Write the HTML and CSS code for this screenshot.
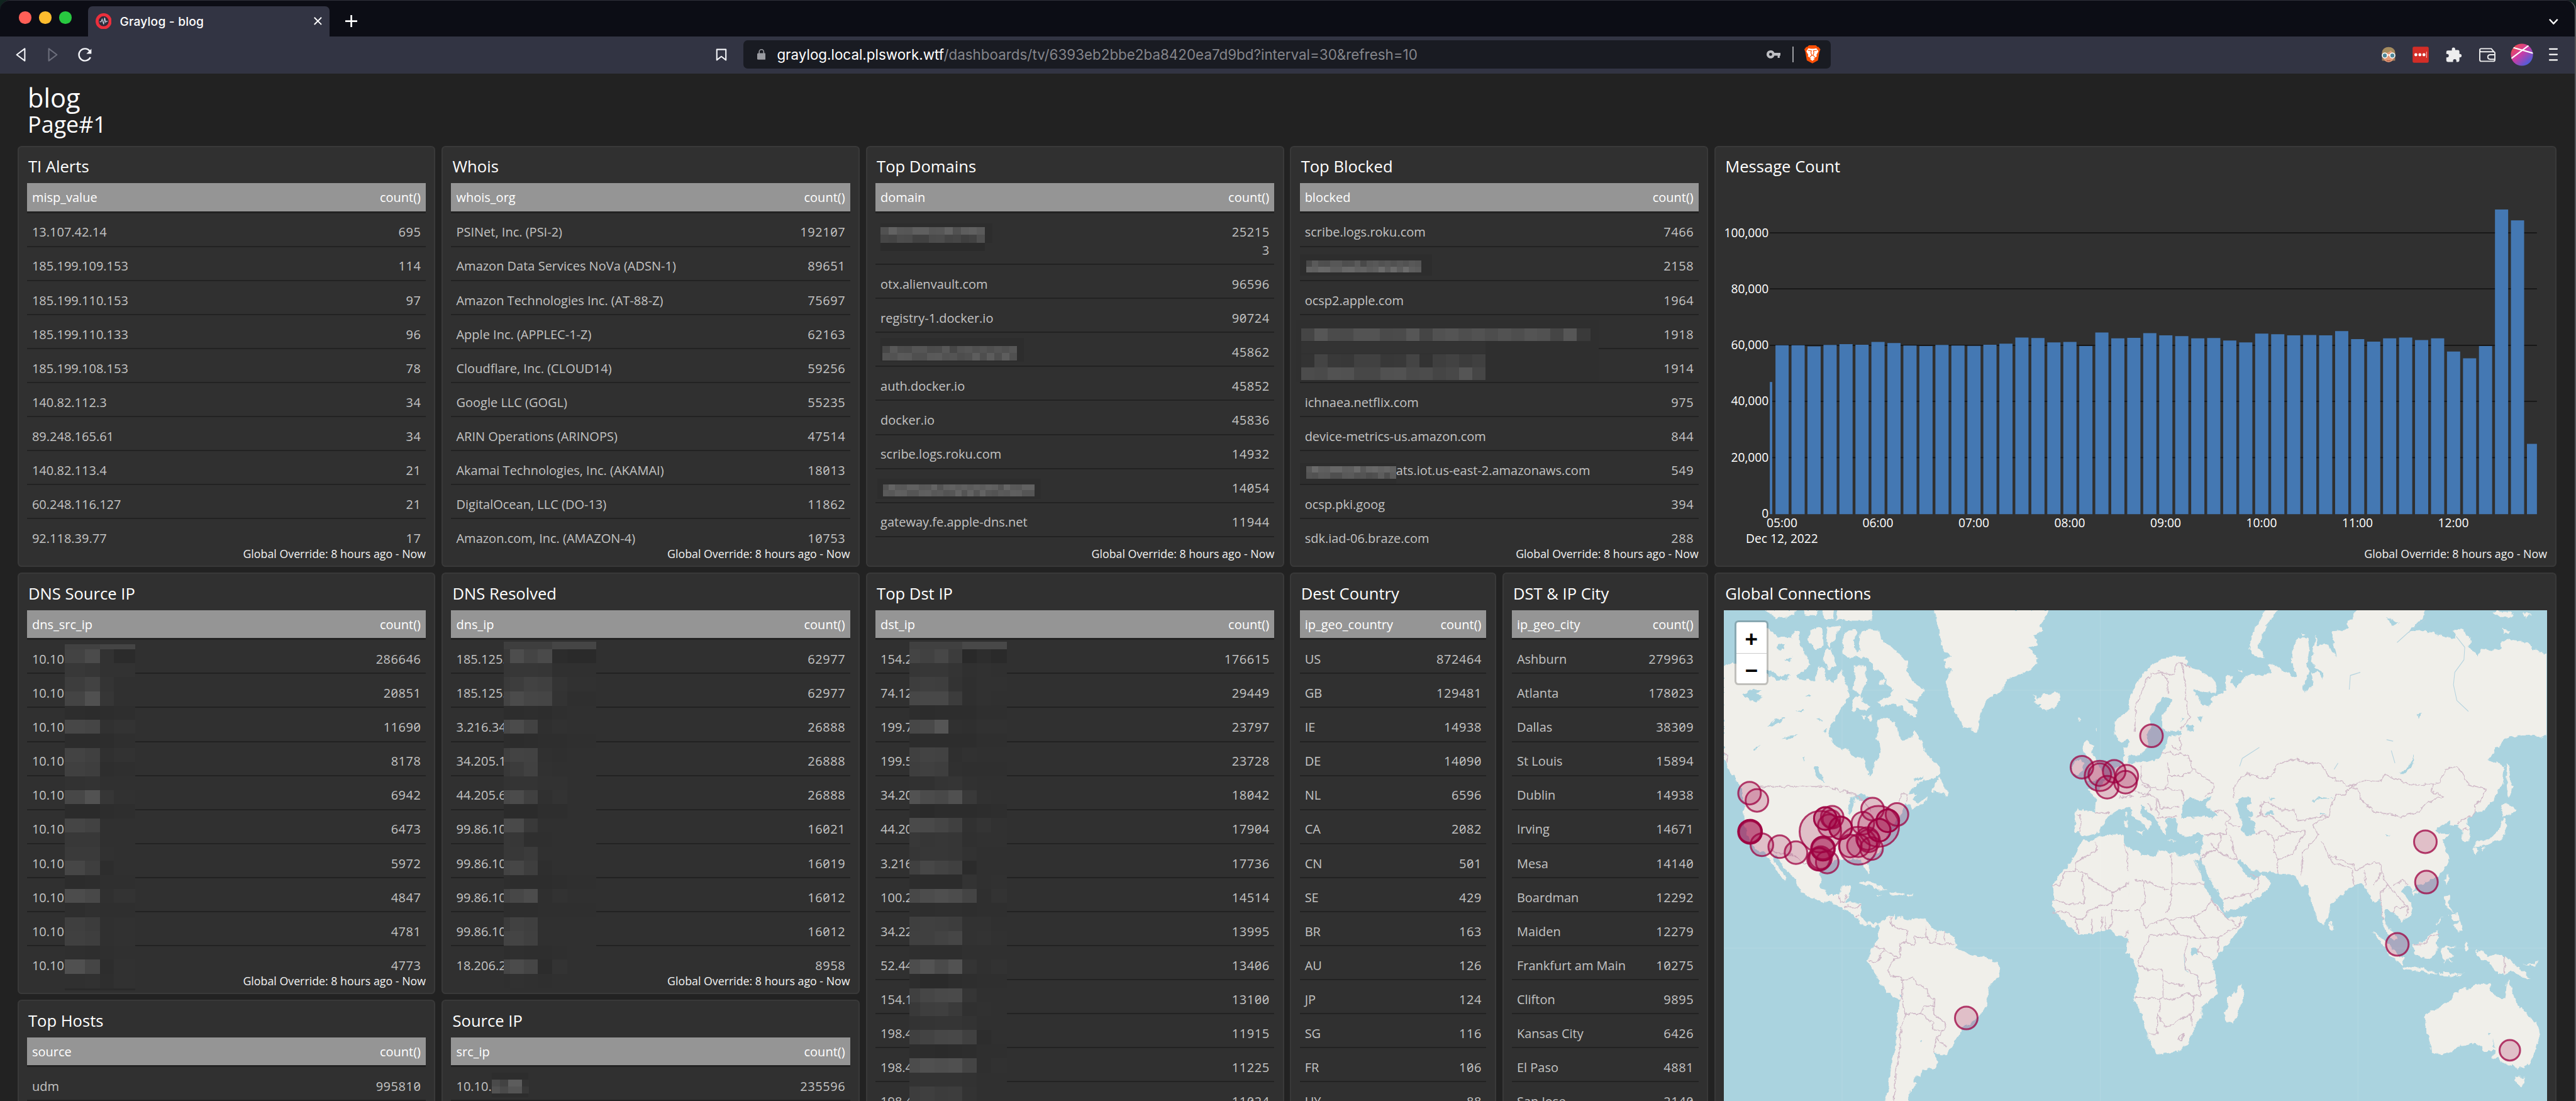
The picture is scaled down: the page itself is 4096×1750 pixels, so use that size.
FILE: index.html
```html
<!DOCTYPE html>
<html lang="en">
<head>
<meta charset="utf-8">
<title>Graylog - blog</title>
<link rel="stylesheet" href="styles.css">
</head>
<body>
<div class="window">
  <header class="tabs">
    <div class="lights"><i class="red"></i><i class="yellow"></i><i class="green"></i></div>
    <div class="tab">
      <svg class="favicon" viewBox="0 0 32 32"><circle cx="16" cy="16" r="13" fill="#2b2c3a" stroke="#eb2f3c" stroke-width="6"/><path d="M8 17h3l2-5 3 10 2-13 2 9 1-2h3" fill="none" stroke="#c9ccdb" stroke-width="1.5"/></svg>
      <span class="tab-title">Graylog - blog</span>
      <svg class="close" viewBox="0 0 16 16"><path d="M1 1l14 14M15 1L1 15" stroke="#fff" stroke-width="2.4"/></svg>
    </div>
    <svg class="newtab" viewBox="0 0 24 24"><path d="M12 0v24M0 12h24" stroke="#fff" stroke-width="3.4"/></svg>
    <svg class="tabmenu" viewBox="0 0 18 12"><path d="M1 1l8 8.5L17 1" fill="none" stroke="#fff" stroke-width="3"/></svg>
  </header>
  <div class="toolbar">
    <div class="nav">
      <svg viewBox="0 0 50 50"><path d="M33 13v24L17 25z" fill="none" stroke="#f3f4f8" stroke-width="2.6" stroke-linejoin="round"/></svg>
      <svg viewBox="0 0 50 50"><path d="M17 13v24l16-12z" fill="none" stroke="#6c6e7c" stroke-width="2.6" stroke-linejoin="round"/></svg>
      <svg viewBox="0 0 50 50"><path d="M36 30A12 12 0 1 1 34.500 17.500" fill="none" stroke="#f3f4f8" stroke-width="3"/><path d="M38 13v10h-10z" fill="#f3f4f8"/></svg>
      <svg class="bookmark" viewBox="0 0 50 50"><path d="M16 14.500h18v21l-9-7-9 7z" fill="none" stroke="#f3f4f8" stroke-width="2.6" stroke-linejoin="round"/></svg>
    </div>
    <div class="address">
      <svg class="lock" viewBox="0 0 17 22"><path d="M4 9V5.500a4.500 4.500 0 0 1 9 0V9" fill="none" stroke="#9a9ba1" stroke-width="2"/><rect y="8" width="17" height="13" rx="2" fill="#9a9ba1"/></svg>
      <span class="url"><b>graylog.local.plswork.wtf</b>/dashboards/tv/6393eb2bbe2ba8420ea7d9bd?interval=30&amp;refresh=10</span>
      <svg class="key" viewBox="0 0 28 16"><path d="M8 0a8 8 0 1 0 7.500 10.500H22V15h4v-4.500h2V5H15.500A8 8 0 0 0 8 0zm0 5a3 3 0 1 1 0 6 3 3 0 0 1 0-6z" fill="#bdbec2" fill-rule="evenodd"/></svg>
      <i class="sep"></i>
      <svg class="brave" viewBox="0 0 32 36"><path d="M9 0h14l3 3h2l4 5-2 5-3 17-11 6-11-6L2 13 0 8l4-5h2z" fill="#fb4f05"/><path d="M8 6l5 1h6l5-1 4 6-4 7 1 3-5 3h-8l-5-3 1-3-4-7z" fill="#fff"/><path d="M16 24l5 3-5 4-5-4z" fill="#fff"/><path d="M7 10l7 1-1 4 2 5-4 3M25 10l-7 1 1 4-2 5 4 3M14 20h4" fill="none" stroke="#fb4f05" stroke-width="1.500"/></svg>
    </div>
    <div class="extensions">
      <svg viewBox="0 0 50 50"><path d="M12 37V20a13 10 0 0 1 26 0v17z" fill="#9d7a58"/><ellipse cx="25" cy="27" rx="11.500" ry="13" fill="#e39a78"/><path d="M12 24c-1-19 27-19 26 0-6-3-8-6-8-8-4 4-9 7-18 8z" fill="#a48c5f"/><path d="M21 36q4 2 8 0" stroke="#b5583f" stroke-width="1.500" fill="none"/><circle cx="17.500" cy="26.500" r="5" fill="#4f8797" stroke="#fff" stroke-width="2"/><circle cx="32.500" cy="26.500" r="5" fill="#4f8797" stroke="#fff" stroke-width="2"/><path d="M22 25.500h6" stroke="#fff" stroke-width="2"/></svg>
      <svg class="m11" viewBox="0 0 50 50"><rect x="9" y="9" width="32" height="32" rx="3" fill="#d32d27"/><g fill="#fff"><circle cx="15.500" cy="25" r="3"/><circle cx="23.500" cy="25" r="3"/><circle cx="31.500" cy="25" r="3"/><rect x="36" y="19" width="1.500" height="12" fill="#f3a9a6"/></g></svg>
      <svg class="m12" viewBox="0 0 50 50"><path d="M22 15v-1a3.300 3.300 0 0 1 6.600 0v1.500H34q3 0 3 3v5h1a3.300 3.300 0 0 1 0 6.800h-1v6q0 3-3 3h-3V37a3.300 3.300 0 0 0-6.600 0v2.300H14q-3 0-3-3v-6h1.500a3.300 3.300 0 0 0 0-6.800H11v-4q0-3 3-3h8z" fill="#ededee"/></svg>
      <svg class="m14" viewBox="0 0 50 50"><path d="M10 17v18q0 3 3 3h24q3 0 3-3V22q0-3-3-3H12q-2-1-2-3.500t3-2.500h20l5 6" fill="none" stroke="#ededee" stroke-width="2.400"/><path d="M40 25h-9q-5 0-5 4.500t5 4.500h9" fill="none" stroke="#ededee" stroke-width="2.400"/></svg>
      <svg class="m15" viewBox="0 0 50 50"><defs><linearGradient id="ball" x1=".1" y1=".1" x2=".85" y2=".95"><stop offset="0" stop-color="#f04d4e"/><stop offset=".45" stop-color="#cb3ba6"/><stop offset="1" stop-color="#3b62e0"/></linearGradient><clipPath id="ballclip"><circle cx="25" cy="25" r="22"/></clipPath></defs><circle cx="25" cy="25" r="22" fill="url(#ball)"/><path clip-path="url(#ballclip)" d="M2 34L42 4M5 10l46 13" stroke="#fff" stroke-width="2.600"/></svg>
      <svg class="m10" viewBox="0 0 50 50"><path d="M17.500 13.500h15M17.500 24.500h15M17.500 35.500h15" stroke="#fff" stroke-width="2.800" stroke-linecap="round"/></svg>
    </div>
  </div>
  <main class="page">
    <h1>blog</h1>
    <h2>Page#1</h2>
    <div class="dashboard" id="dashboard"></div>
  </main>
</div>
<script src="app.js"></script>
</body>
</html>
```
FILE: styles.css
```css
* { box-sizing: border-box; }
html, body { margin: 0; height: 1750px; overflow: hidden; background: #10241f; }
body { font-family: "Open Sans", "Noto Sans", sans-serif; color: #fff; }
.window { width: 4096px; height: 1750px; overflow: hidden; background: #222; border-radius: 16px 16px 0 0; position: relative; }
.window::after { content: ""; position: absolute; inset: 0; border-right: 2px solid #57585c; border-top: 1px solid #30313a; border-radius: 16px 16px 0 0; pointer-events: none; }
svg { display: block; flex: none; }

.tabs { height: 57.6px; background: #0c0d15; display: flex; align-items: flex-end; }
.lights { display: flex; gap: 12.8px; width: 139.6px; padding: 0 0 20px 30.4px; }
.lights i { width: 19.2px; height: 19.2px; border-radius: 50%; }
.red { background: #ff5f57; }
.yellow { background: #febc2e; }
.green { background: #28c840; }
.tab { width: 384px; height: 48px; background: #323443; border-radius: 7px 7px 0 0; display: flex; align-items: center; padding: 0 12px 0 12.2px; }
.favicon { width: 25.6px; height: 25.6px; }
.tab-title { font: 500 19.2px/24px Inter, sans-serif; margin-left: 13px; letter-spacing: .2px; }
.close { width: 12.8px; height: 12.8px; margin-left: auto; }
.newtab { width: 19.2px; height: 19.2px; margin: 0 0 14.4px 25.6px; }
.tabmenu { width: 14.6px; height: 9.6px; margin: 0 28px 18.5px auto; }

.toolbar { height: 59.3px; background: #323443; display: grid; grid-template-columns: 1182.3px 1728.7px 1fr; align-items: center; }
.nav { display: flex; gap: 11.2px; padding: 0 15.8px 0 12.8px; }
.nav svg, .extensions svg { width: 40px; height: 40px; }
.bookmark { margin-left: auto; }
.address { height: 44.8px; border-radius: 7px; background: #191b22; display: flex; align-items: center; padding: 0 16px 0 21.5px; margin-bottom: 1.2px; }
.lock { width: 13.6px; height: 17.6px; }
.url { font: 400 22.4px/28px Inter, sans-serif; color: #84858b; margin-left: 18px; white-space: nowrap; }
.url b { font-weight: 400; color: #fff; }
.key { width: 22.4px; height: 12.8px; margin-left: auto; }
.sep { width: 1.6px; height: 25.6px; background: #9c9da2; margin: 0 17.5px 0 19.2px; }
.brave { width: 25.6px; height: 28.8px; }
.extensions { display: flex; justify-content: flex-end; padding-right: 16px; }
.m10 { margin-left: 10px; }
.m11 { margin-left: 11px; }
.m12 { margin-left: 12px; }
.m14 { margin-left: 14px; }
.m15 { margin-left: 15px; }

.page { padding: 14.7px 0 0 27.5px; }
h1, h2 { margin: 0; padding-left: 16.6px; font-weight: 400; }
h1 { font-size: 41.6px; line-height: 46.2px; }
h2 { font-size: 35.9px; line-height: 39px; }
.dashboard { margin-top: 14.8px; width: 4037.8px; display: grid; grid-template-columns: repeat(12, 1fr); grid-auto-rows: 669.2px; gap: 9.7px; }
.panel { grid-column: span 2; position: relative; background: #303030; border: 2px solid #393939; border-radius: 6.4px; padding: 13.8px 13.4px 7px; display: flex; flex-direction: column; min-width: 0; overflow: hidden; }
.half { grid-column: span 1; }
.wide { grid-column: span 4; }
.tall { grid-row: span 2; }
h3 { margin: 0 0 8.9px; font-weight: 400; font-size: 25.6px; line-height: 35.1px; flex: none; padding-left: 2px; white-space: nowrap; }
.body { flex: 1; min-height: 0; overflow: hidden; }
table { width: 100%; border-collapse: separate; border-spacing: 0; table-layout: fixed; font-size: 20px; line-height: 28.8px; }
th { background: #959595; font-weight: 400; text-align: left; height: 47.2px; padding: 8.4px 8px 6.8px; border-bottom: 3.2px solid #222; white-space: nowrap; }
td { color: #c3c3c3; height: 54.04px; padding: 16.9px 8px 6.34px; border-bottom: 2px solid #222; white-space: nowrap; vertical-align: top; }
.count { text-align: right; width: 104px; }
td.count { font-variant-numeric: slashed-zero tabular-nums; letter-spacing: .028em; white-space: pre-line; padding-right: 7.4px; }
footer { font-size: 17.8px; line-height: 24px; text-align: right; color: #f2f2f2; flex: none; }
.mosaic, .chart { position: absolute; left: -2px; top: -2px; width: calc(100% + 4px); height: calc(100% + 4px); pointer-events: none; }
.chart text { font-size: 24px; fill: #fff; }
.map { position: relative; flex: 1; margin: 0 0 8px; overflow: hidden; background: #aad3df; }
.zoom { position: absolute; left: 16.3px; top: 16px; width: 54.4px; height: 102.8px; border: 3.2px solid rgba(0,0,0,.2); border-radius: 6.4px; background: #fff; background-clip: padding-box; display: grid; grid-template-rows: 1fr 1fr; color: #000; font: 700 35px/60px "Liberation Mono", monospace; text-align: center; }
.zoom span { height: 48px; }
.zoom span + span { border-top: 1.6px solid #ccc; }
```
FILE: app.js
```js
const rows = text => text.trim().split('\n').map(line => line.split('|'));

// Pixelated cover for private values: cells between column and row edges, one grey level each.
function cells(xs, ys, levels) {
  let out = '';
  levels.forEach((line, r) => line.split(' ').forEach((v, c) => {
    out += `<rect x="${xs[c]}" y="${ys[r]}" width="${xs[c + 1] - xs[c] + .3}" height="${ys[r + 1] - ys[r] + .3}" fill="#${v}${v}${v}"/>`;
  }));
  return out;
}
function strip(x0, x1, n, ys, bases) {
  let out = '', w = (x1 - x0) / n;
  bases.forEach((b, r) => {
    for (let i = 0; i < n; i++) {
      const g = Math.round(b + (((i * 37 + r * 23) * 7 + i * i * 5) % 19) - 9);
      out += `<rect x="${x0 + i * w}" y="${ys[r]}" width="${w + .3}" height="${ys[r + 1] - ys[r] + .3}" fill="rgb(${g},${g},${g})"/>`;
    }
  });
  return out;
}
const box = (x, y, x2, y2, c) => `<rect x="${x}" y="${y}" width="${x2 - x}" height="${y2 - y}" fill="${c}"/>`;
const cover = (view, shift, content) =>
  `<svg class="mosaic" viewBox="${view}" preserveAspectRatio="none" shape-rendering="crispEdges"><g transform="${shift}">${content}</g></svg>`;

const bands = [249, 290, 331, 372, 414, 455, 496, 537, 579, 620, 661, 702, 743, 784, 826, 867, 908, 949, 990, 1031, 1073, 1114, 1155, 1197, 1240,
  1280, 1321, 1362, 1403, 1444, 1486, 1527, 1570];

const srcCover = cover('34.4 1137.3 830.5 835.5', 'translate(0 1120) scale(1.097 .6798)',
  box(117, 235, 244, 1245, '#303030') + box(117, 235, 244, 249, '#414141') + box(180, 235, 244, 249, '#444') +
  cells([117, 153, 180, 205, 244], bands, ['43 4b 32 2b', '38 36 32 32', '3d 42 34 30', '44 50 36 30', '2d 2c 2d 2e', '47 45 31 33', '2c 2c 2d 2f',
    '43 40 30 32', '40 3e 2e 2f', '32 33 30 30', '47 52 36 31', '2b 2b 2d 2e', '45 42 30 30', '38 38 30 30', '3a 3a 31 30', '46 3e 2d 30',
    '2c 2d 2f 2f', '4c 48 30 33', '2e 30 2f 2f', '3f 3c 30 31', '40 3e 30 31', '2f 2e 2f 30', '50 45 2d 31', '30 31 2e 31']) + box(117, 1240, 244, 1245, '#2a2a2a'));

const resCover = cover('876.9 1137.3 830.5 835.5', 'translate(0 1120) scale(1.097 .6798)',
  box(912, 228, 1079, 1236, '#303030') + box(912, 228, 1079, 249, '#3e3e3e') + box(1000, 228, 1079, 249, '#454545') +
  cells([912, 923, 948, 974, 1000, 1027, 1079], bands, ['38 4d 44 4a 2c 2a', '36 37 37 36 30 30', '3a 3d 42 40 34 31', '44 4b 46 45 33 2f', '2d 2d 2e 2d 2f 30', '46 4b 42 2f 31 30', '2d 2c 2d 2e 2e 2f',
    '3f 43 42 30 2f 30', '38 3c 41 31 30 30', '33 34 34 32 32 30', '48 4b 40 30 33 30', '2b 2b 2b 2e 2e 30', '4a 49 39 30 30 30', '38 37 2f 2f 30 30', '38 38 3b 30 30 30', '43 46 3e 2e 30 30',
    '2e 2d 2d 2d 2e 2f', '42 47 4c 2f 32 30', '2d 2e 2e 2f 2f 2f', '3b 41 3f 30 30 30', '43 44 40 30 30 30', '2e 2f 2e 2e 2f 30', '46 4b 45 2c 33 30', '2f 31 30 2f 30 30']));

const dstCover = cover('1719.4 1137.3 830.5 1684', 'translate(1700 1120) scale(1.097 .6798)',
  box(96, 227, 273, 1570, '#303030') + box(96, 227, 192, 249, '#404040') + box(192, 227, 273, 249, '#484848') +
  cells([96, 116, 142, 167, 192, 218, 244, 273], bands, ['44 41 47 3c 29 2d 2a', '36 37 37 34 30 31 30', '3d 3f 3e 33 2f 31 31', '47 48 48 3c 2f 31 30', '2d 2c 2d 2d 2d 2f 2f', '47 49 55 30 2f 31 31', '2c 2d 2d 2d 2d 2f 2f',
    '40 43 42 2f 31 30 30', '3e 40 3e 30 2f 2f 2f', '31 31 34 35 31 30 30', '52 4b 48 50 39 31 30', '2c 2a 2c 2c 2c 2d 2e', '4a 49 45 40 31 34 31', '38 36 37 36 30 31 31', '36 37 37 36 32 30 30', '40 47 43 40 2b 30 30',
    '2d 2c 2c 2c 33 30 31', '48 4c 4f 4c 44 2f 33', '2f 2e 2f 2f 2e 2f 2f', '3f 40 3f 3d 32 32 30', '40 40 43 46 32 33 31', '2f 2e 2e 2e 30 30 30', '4d 53 4a 52 34 30 32', '2d 2a 2a 2d 2e 2f 2f',
    '40 46 49 4a 35 30 30', '39 3e 3f 3a 30 31 30', '33 34 35 35 33 30 30', '40 43 47 48 40 2d 30', '2d 2c 2b 2c 2d 2f 2f', '4c 50 4e 50 44 2f 31', '33 33 33 33 32 30 30', '3d 3f 3c 3d 33 30 30']));

const ipCover = cover('876.9 1985.3 830.5 835.5', 'translate(0 1120) scale(1.097 .6798)',
  box(890, 1486, 957, 1558, '#2d2d2d') + cells([891, 905, 920, 945, 957], [1507, 1527, 1547], ['4a 42 5c 32', '52 4a 54 38']));

const domCover = cover('1719.4 289.3 830.5 835.5', 'translate(1700 280) scale(1.097 .5485)',
  box(44, 298, 247, 368, '#2d2d2d') + strip(44, 233, 13, [310, 339, 368], [90, 70]) + box(44, 368, 233, 398, '#2b2b2b') +
  box(44, 712, 303, 798, '#2d2d2d') + strip(47, 291, 18, [741, 766, 792], [80, 84]) +
  box(38, 1220, 334, 1294, '#2d2d2d') + strip(48, 322, 25, [1242, 1263, 1285], [92, 90]));

const blkCover = cover('2561.9 289.3 830.5 835.5', 'translate(1700 280) scale(1.097 .5485)',
  box(804, 408, 1043, 486, '#2d2d2d') + strip(815, 1023, 19, [432, 453, 475], [82, 98]) +
  box(797, 645, 1345, 870, '#2f2f2f') + strip(806, 1305, 21, [676, 722], [78]) + box(1305, 676, 1330, 722, '#3a3a3a') +
  box(806, 724, 1140, 768, '#333') + strip(806, 1140, 14, [770, 818, 864], [60, 76]) +
  box(804, 1165, 978, 1240, '#2d2d2d') + strip(815, 978, 15, [1176, 1198, 1220], [98, 84]));

const footer = '<footer>Global Override: 8 hours ago - Now</footer>';
function tablePanel({ title, field, data, cls = '', extra = '' }) {
  const body = rows(data).map(([a, b]) => `<tr><td>${a}</td><td class="count">${b.replace('/', '\n')}</td></tr>`).join('');
  return `<section class="panel ${cls}"><h3>${title}</h3><div class="body"><table><thead><tr><th>${field}</th><th class="count">count()</th></tr></thead><tbody>${body}</tbody></table></div>${footer}${extra}</section>`;
}

function chartPanel() {
  const tops = [738, 738, 742, 737, 734, 736, 726, 730, 739, 741, 737, 739, 740, 736, 732, 710, 712, 728, 726, 741, 692, 713, 711, 694,
    702, 705, 713, 712, 721, 728, 696, 698, 702, 701, 702, 687, 716, 725, 713, 710, 719, 713, 761, 785, 741, 247, 286, 1095];
  const X = x => (3390 + x * 1.1008).toFixed(1), Y = y => (280 + y * .5485).toFixed(1);
  const grid = [331.5, 534, 738, 941, 1144.5].map(y => `<path d="M${X(113)} ${Y(y)}H${X(1497)}" stroke="#151515" stroke-width="2.2"/>`).join('');
  let bars = `<path d="M${X(113)} ${Y(1349)}V${Y(871)}H${X(117.5)}V${Y(1349)}z"/>`;
  tops.forEach((t, i) => {
    const x = 123.300 + i * 28.845;
    bars += `<path d="M${X(x)} ${Y(1349)}V${Y(t)}H${X(Math.min(x + 23.8, 1497))}V${Y(1349)}z"/>`;
  });
  const ys = [['100,000', 331.5], ['80,000', 534], ['60,000', 738], ['40,000', 941], ['20,000', 1144.5], ['0', 1348]]
    .map(([t, y]) => `<text x="${X(111)}" y="${+Y(y) + 8}" text-anchor="end">${t}</text>`).join('');
  const xs = ['05', '06', '07', '08', '09', '10', '11', '12']
    .map((h, i) => `<text x="${X(135 + i * 173.05)}" y="${Y(1397)}" text-anchor="middle">${h}:00</text>`).join('');
  return `<section class="panel wide"><h3>Message Count</h3><div class="body"></div>${footer}
    <svg class="chart" viewBox="3404.4 289.3 1673 835.5" preserveAspectRatio="none">${grid}<g fill="#4478b3">${bars}</g>${ys}${xs}
    <text x="${X(135)}" y="${Y(1453)}" text-anchor="middle">Dec 12, 2022</text></svg></section>`;
}

const west = {
  land: `M0 178L30 168 60 175 110 170 170 205 200 225 240 222 270 200 290 225 330 222 360 235 400 225 420 235 440 200 450 195 470 240 480 275 462 290 445 320 425 345 405 375 400 405 415 420 430 440 470 448 500 468 532 475 540 505 555 530 570 525 572 490 590 475 598 455 592 430 580 410 590 390 583 365 595 345 630 348 655 365 665 385 668 405 690 418 710 410 728 385 740 405 755 425 765 455 800 485 822 500 826 525 800 540 760 545 735 560 715 575 700 590 735 585 720 605 735 620 775 600 770 612 720 636 715 625 690 620 680 650 660 670 640 690 625 715 610 740 605 760 590 775 560 790 545 798 548 810 560 835 553 843 535 820 520 800 490 795 470 800 440 795 400 810 372 830 367 850 370 885 395 910 440 910 450 885 485 882 475 910 465 935 490 937 523 943 520 978 545 1000 580 998 592 1006 570 1012 550 1005 530 1008 500 985 485 965 460 955 430 945 410 933 380 935 340 920 300 905 285 885 270 860 245 840 225 815 205 790 185 780 195 805 220 835 238 855 235 865 210 845 190 820 170 795 160 780 120 765 100 740 80 690 75 655 80 625 70 590 65 560 40 545 35 530 20 515 10 490 0 470z
    M545 65L590 68 600 95 640 120 680 150 700 170 695 200 735 240 765 255 755 275 735 295 690 280 735 320 733 345 700 330 680 310 640 300 600 310 583 295 610 285 630 280 650 255 620 240 610 205 580 190 550 160 510 150 480 155 455 140 452 100 465 70 500 60 510 75 495 100 505 135 520 130 515 90 525 70z
    M170 60L200 85 260 90 270 65 290 70 285 100 300 130 330 175 300 200 260 210 210 210 180 195 150 185 120 150 125 100 150 70z
    M320 85L345 55 375 60 380 110 350 130 330 110zM395 55L445 52 425 90 400 120 385 90zM385 130L410 125 430 180 400 190 380 165zM345 240L360 180 385 190 392 240zM155 0H285L270 15 200 30 180 15zM370 0H420L415 30 385 30zM430 0H565V35H480L430 30zM300 0H360L350 20 310 18z
    M495 180L540 180 545 230 520 270 490 255 500 220zM490 290L520 270 530 300 560 310 545 325 510 315 490 325zM590 225L612 222 610 240 592 240zM525 338L540 340 535 348zM548 345L568 338 560 355z
    M822 535L830 555 855 580 850 597 835 585 790 580 805 560z
    M800 0H1240L1205 55 1220 65 1185 80 1195 115 1160 120 1198 155 1190 175 1150 200 1085 220 1060 255 1000 290 980 330 965 390 940 380 915 375 890 340 870 310 850 250 848 225 875 190 840 185 838 155 870 150 838 130 820 70z
    M1175 268L1200 285 1215 268 1240 270 1275 262 1285 290 1260 310 1230 325 1200 315 1205 300 1180 298 1195 288z
    M1340 485L1360 475 1375 490 1370 515 1345 530 1325 520 1330 500zM1372 430L1385 415 1412 435 1400 455 1415 470 1430 500 1450 520 1445 540 1400 548 1385 545 1405 520 1390 500 1400 490 1385 470 1368 455z
    M512 875L530 866 560 870 600 885 622 895 590 895 560 880zM625 905L650 898 688 908 660 915 635 910zM700 909L718 911 715 915 700 914zM582 911L602 914 585 916z
    M590 1008L600 995 640 975 655 972 650 990 665 980 700 988 740 985 770 988 785 1010 815 1030 850 1030 875 1045 890 1070 885 1085 920 1092 950 1105 1000 1110 1045 1130 1055 1150 1050 1170 1010 1205 1008 1240 1000 1265 970 1300 940 1320 910 1335 903 1350 880 1380 850 1420 825 1422 800 1412 808 1435 815 1445 800 1465 755 1470 750 1490 725 1492 722 1510 740 1512 715 1530 698 1568V1590H610L615 1568 630 1520 640 1440 655 1390 660 1320 668 1250 620 1220 600 1200 570 1150 548 1125 555 1100 565 1080 590 1050 592 1020z
    M1368 735L1390 738 1440 722 1525 716 1525 750 1560 770 1590 775V1170L1555 1115 1535 1095 1540 1050 1530 1042 1495 1040 1470 1022 1440 1025 1400 1035 1350 1038 1325 1015 1300 1000 1270 975 1250 945 1258 920 1255 880 1275 850 1310 820 1335 790 1350 760z
    M1335 645L1345 638 1415 645 1418 600 1385 575 1430 575 1450 545 1480 530 1500 500 1520 490 1525 440 1545 430 1550 460 1590 480V670L1545 630 1530 635 1505 640 1465 660 1440 690 1430 712 1385 722 1368 725 1355 712 1335 710 1340 670zM1528 672L1538 672 1538 695 1528 693zM1531 650L1538 648 1537 664 1531 662z
    M1590 260L1540 325 1490 355 1490 400 1510 425 1540 415 1590 375zM1355 348L1362 350 1357 358zM1418 380L1424 378 1420 392z`,
  water: `M70 270L110 255 145 255 120 270 150 275 125 295 95 285zM165 375L195 350 235 345 215 360 185 372zM220 415L250 403 280 400 255 412zM355 345L375 352 365 358zM340 500L358 500 365 520 382 535 378 548 358 535zM488 600L500 605 488 640 480 660 474 635zM480 600L520 588 560 600 535 612 500 600zM310 275L335 270 330 280zM270 320L310 322 295 328zM375 385L392 383 385 395zM300 470L308 468 302 485zM110 440L140 436 120 446zM747 1374L755 1375 750 1380zM672 1228L682 1232 675 1238z
    M210 110L235 108 225 130 205 125zM230 160L260 150 250 170zM720 540L760 535 730 550z`,
  lines: `M140 565H400L440 578 480 582 520 600 560 640M670 610L680 590 695 590 697 615M175 765L215 780 260 782 290 800 330 820M0 455L15 465 12 490M440 915L440 935 460 935 468 912M460 950L480 945 495 955 523 945M500 980L515 975M640 975L635 1000 655 1015 700 1025 697 1060 670 1070 672 1110 645 1105 610 1085 572 1072M555 1120L575 1125 600 1105 612 1085M672 1110L640 1125 628 1150 635 1170 665 1172 680 1185 720 1175 735 1195 775 1210 778 1232 802 1245 800 1290 830 1310 848 1330 810 1370 850 1395M680 1185L680 1235 670 1252M680 1240L690 1290 750 1290 760 1268 800 1265M750 1290L795 1320 798 1340 835 1342M690 1290L670 1360 672 1400 655 1470 650 1568M810 1370L800 1412M697 1060L725 1070 730 1045 770 1045 770 1010M770 1040L790 1065 885 1070M810 1030L805 1060M845 1030L843 1060M1345 655L1362 658 1355 712M1415 645L1468 652M1415 740L1420 768 1375 790 1340 810 1340 835 1300 838 1280 880 1250 882M1340 825L1480 905 1568 862M1365 845L1375 938 1310 940 1275 930 1255 930M1480 905L1478 940 1435 945 1385 965 1375 988 1340 988 1305 965 1255 965M1525 750L1540 780 1540 830 1568 855M1480 960L1480 1000 1465 1022M1480 960L1568 960M1400 985L1405 1035M1440 980L1440 1025M1455 980L1455 1022M1350 1035L1340 990M1505 600L1568 595M1530 1042L1568 1005M1540 1062L1568 1062`
};

const east = {
  land: `M-22 280L15 225 40 195 80 170 130 150 190 150 205 165 195 178 240 190 290 215 318 245 305 268 270 265 225 255 240 280 255 300 280 308 300 300 285 280 310 275 330 262 350 262 345 240 350 210 375 215 365 235 385 250 420 215 450 205 480 210 520 200 510 175 540 180 580 200 600 215 620 212 598 165 605 120 625 90 660 92 665 130 655 180 665 200 640 250 655 262 680 240 675 200 700 200 720 225 720 200 690 185 672 165 680 120 690 85 700 115 730 110 750 130 770 150 760 110 750 70 815 62 805 45 830 20 850 0H1110L1095 30 1040 70 1090 65 1140 75 1180 85 1225 95 1215 65 1250 65 1280 95 1275 120 1305 150 1320 125 1365 130 1400 125 1390 105 1430 95 1500 105 1520 125 1590 152V385L1555 405 1500 402 1420 405 1380 440 1345 480 1390 490 1410 500 1400 560 1360 615 1320 645 1295 650 1265 672 1280 710 1275 740 1250 740 1252 710 1230 695 1235 685 1200 690 1200 675 1175 685 1160 695 1145 705 1170 715 1205 715 1170 735 1190 770 1200 795 1180 830 1150 855 1110 870 1070 885 1062 898 1050 885 1030 880 1020 900 1045 930 1060 955 1055 975 1035 985 1015 1000 1010 985 985 970 975 960 955 960 950 990 965 1015 985 1025 1000 1050 990 1060 960 1030 945 1000 940 960 935 925 905 935 890 900 870 880 850 875 820 885 800 905 745 940 742 970 730 995 715 1008 700 995 680 950 665 910 662 880 635 885 620 860 595 845 540 842 480 835 450 835 435 825 400 795 395 810 410 830 425 850 450 862 470 855 485 840 520 870 505 895 445 930 380 955 342 965 335 925 300 880 270 830 255 800 247 780 262 745 265 722 240 715 200 725 160 710 165 680 150 665 120 670 125 690 115 720 100 705 82 670 60 650 40 640 30 625-22 585z
    M-15 628L20 650 65 680 50 705 40 690-10 655zM3 708L35 706 32 720zM125 738L158 738 140 742zM225 740L245 736 232 745z
    M-22 768L40 785 80 790 95 768 140 775 175 785 240 778 250 790 245 805 225 795 250 840 270 890 290 925 330 955 345 985 425 978 410 1010 360 1060 320 1100 295 1130 310 1180 312 1225 255 1270 255 1300 225 1335 205 1385 160 1412 85 1420 65 1390 45 1350 25 1290-4 1240 15 1180 5 1130-22 1090z
    M405 1195L418 1225 400 1270 375 1322 345 1315 342 1290 355 1265 350 1240 385 1220zM742 995L762 1015 755 1028 742 1020zM908 1030L940 1045 990 1090 1025 1115 1022 1135 985 1115 950 1075zM1022 1140L1070 1140 1140 1155 1150 1165 1090 1155 1030 1150zM1155 1160L1215 1162 1260 1158 1215 1168 1160 1166zM1060 1070L1095 1065 1130 1035 1155 1025 1150 1065 1155 1080 1130 1118 1085 1110 1068 1095zM1170 1080L1230 1072 1190 1085 1215 1105 1200 1110 1215 1130 1190 1110 1180 1130 1172 1110zM1180 915L1200 912 1198 950 1218 968 1190 955zM1215 1010L1240 995 1248 1020 1235 1028zM1200 975L1235 970 1238 995 1210 990zM1145 1005L1175 980 1160 1000z
    M1295 1092L1330 1090 1345 1110 1370 1097 1430 1115 1450 1135 1490 1160 1510 1178 1475 1172 1440 1155 1410 1165 1375 1155 1355 1125 1320 1115zM1480 1135L1520 1130 1540 1118 1525 1138zM1262 1062L1270 1065 1268 1090 1262 1085zM1225 1170L1250 1162 1235 1176z
    M1110 1290L1150 1275 1200 1250 1215 1225 1255 1210 1275 1215 1300 1195 1355 1195 1350 1215 1385 1238 1410 1245 1415 1205 1425 1180 1440 1215 1455 1255 1490 1285 1530 1320 1545 1355 1530 1400 1505 1450 1465 1465 1440 1455 1400 1450 1385 1430 1360 1435 1375 1410 1340 1410 1300 1385 1240 1395 1210 1410 1160 1422 1128 1412 1125 1380 1105 1320zM1450 1492L1488 1492 1475 1525 1455 1515z
    M1180 865L1195 842 1198 860 1188 875zM1055 900L1080 898 1065 912zM1395 640L1412 615 1455 640 1430 655 1405 660zM1405 665L1420 690 1400 730 1370 740 1330 755 1290 760 1310 740 1350 735 1380 710 1395 690zM1285 760L1308 765 1300 782zM1318 762L1340 758 1325 768zM1418 490L1430 500 1430 540 1440 570 1425 600 1420 560z
    M495 0H550L530 20 505 45 490 75 470 115 495 155 460 150 435 125 450 75 475 40zM1365 5L1420 5 1450 20 1400 28zM1480 10L1515 15 1490 25zM1400 60L1435 68 1410 78zM395 192L412 190 410 202zM635 75L650 78 640 85z`,
  water: `M110 278L145 285 130 310 105 340 105 370 115 392 180 385 178 398 130 405 115 430 100 470 90 480 40 485-22 492V465L20 465 50 440 45 400 65 375 60 345 80 315zM185 615L215 600 250 610 295 595 268 622 320 655 300 668 255 660 215 665 175 665zM385 620L410 600 445 598 445 618 425 628 450 655 435 665 455 680 460 715 420 720 405 700 410 675 395 650zM1005 525L1040 505 1068 465 1060 495 1030 525zM675 612L700 598 760 602 700 605 680 615zM197 370L225 372 222 388 200 382zM240 340L258 342 255 358zM495 650L520 640 530 655 510 655zM215 1085L240 1080 238 1100 218 1105zM1075 330L1090 330 1080 345zM960 22L1005 45 1010 40 980 52zM955 715L970 718 960 722zM705 648L730 655 708 655zM180 345L190 350 178 358zM1348 1352L1355 1352 1350 1360zM1368 1370L1372 1400 1366 1400zM510 600L540 602 520 606zM1190 595L1200 600z`,
  rivers: `M1225 85L1258 120 1255 160 1220 200 1215 240 1228 290 1272 325M818 255L822 210 860 200M400 500L410 475 475 440M960 415L985 420M978 450L992 490M188 1100L192 1150 205 1158M238 1170L248 1210M225 800L250 840M1108 30L1040 75 1000 105M775 490L760 510`,
  lines: `M0 390L5 310 45 225 60 208 100 200 125 220 128 270M90 195L120 205 150 210 158 175 180 170 190 230 200 320 212 340 178 380M180 170L210 185M172 405L175 450 140 435M100 460L130 455 155 465 175 460 205 470 222 510 185 530 130 530 118 570 100 575 25 560M125 490L130 520M25 495L28 550 60 565 50 590 0 580M222 510L300 555 300 580 270 595M118 570L180 580 190 610M20 600L60 590 85 600 100 635 170 630M85 600L80 640 95 655M50 620L70 640M85 660L120 665 160 660M300 640L340 645 365 665 350 680 350 715 265 720M360 680L380 690 400 695M375 600L385 550 430 525 505 540 530 520 540 495 620 475 650 490 705 490 745 535 825 565 800 590 770 590 745 630 740 655 680 690 700 720 640 780 635 850M460 660L490 655 525 660 560 690 605 710M480 660L482 620 510 615 560 640 610 640 620 675 745 655M460 715L495 705 535 735 530 760 545 800 545 842M535 735L575 715 650 705 605 780 545 800M365 720L375 760 390 800 320 775 290 745M265 720L330 715 320 760 258 785M250 800L290 770M338 925L440 905 470 890 475 855 440 845M440 905L448 930M715 740L735 780 750 790 835 815 840 830 870 820 915 805 940 820 940 840M745 790L750 805 830 830 835 880M875 830L880 880M825 565L850 570 865 610 915 645 1015 660 1085 645 1110 620 1175 595 1130 580 1140 555 1060 560 1010 545 950 525 935 550 880 545 825 565M1140 555L1165 550 1185 510 1225 500 1250 520 1270 560 1340 575 1320 610 1300 620 1300 650 1230 680M1250 705L1270 698M910 880L940 840 965 880 935 905 945 990M965 880L985 900 1040 950 1035 980M985 880L1020 865 1045 880M985 970L1000 950 1040 950M1065 1070L1100 1070 1130 1040 1160 1040M1410 1108V1162
    M140 780V875H268M140 875V895L130 960 115 970M0 860L35 870 40 930 20 960 0 960M35 865L130 895M20 960L40 1015 115 985 130 990 225 980 270 960 290 930M130 990L165 1035 60 1040 30 1090 10 1130M165 1035L205 1045 250 1050 320 1045 400 1010 405 978M320 1045L318 1095M205 1045L190 1100 195 1150 240 1170 245 1200 310 1180M250 1070L240 1090 295 1120M10 1135L50 1150 105 1150 108 1185 185 1200M108 1185V1240L0 1240M108 1240L150 1245 200 1225 225 1235 225 1275 215 1290 120 1335 85 1290V1355L50 1355M95 1245V1285M200 1225L250 1235 245 1200M215 1290L220 1330M170 1365L185 1358 178 1375 165 1372zM225 980L240 1010 270 1045M290 925L340 975 390 1010`
};

function mapPanel() {
  const px = .41717, py = .4978, oy = -1;
  const dots = [[98, 586], [126, 609], [100, 709, 19], [100, 709, 18.5], [99, 708], [101, 711], [145, 751], [213, 757], [275, 776], [368, 709, 33], [387, 667], [387, 667], [413, 663], [402, 690], [410, 668, 14],
    [445, 697], [445, 697], [378, 763, 19], [378, 761], [378, 765], [365, 797], [361, 797], [369, 792], [394, 806], [567, 637], [530, 682], [660, 654], [625, 674], [625, 674], [590, 692, 32.5], [592, 704],
    [592, 704], [512, 754, 30], [482, 755], [513, 754], [548, 731], [552, 738], [563, 763], [1365, 503], [1433, 531, 24], [1433, 527], [1488, 516], [1461, 567], [1536, 532], [1531, 551], [924, 1304],
    [1630, 403], [2674, 741], [2678, 870], [2567, 1069], [2996, 1407, 16.3]]
    .map(([x, y, r = 18]) => `<circle cx="${(x * px).toFixed(1)}" cy="${(y * py + oy).toFixed(1)}" r="${r}"/>`).join('');
  const part = (m, x) => `<g transform="translate(${x} ${oy}) scale(${px} ${py})">
    <path d="${m.land}" fill="#f0efea" filter="url(#coast)"/><path d="${m.water}" fill="#aad3df" filter="url(#coast)"/>
    <path d="${m.rivers || ''}" class="river"/><path d="${m.lines}" class="line" filter="url(#coast)"/></g>`;
  return `<section class="panel wide tall"><h3>Global Connections</h3><div class="map">
    <svg width="1308" height="1400" viewBox="0 0 1308 1400">
    <defs><filter id="coast" x="-5%" y="-5%" width="110%" height="110%"><feTurbulence type="fractalNoise" baseFrequency=".055" numOctaves="3" seed="4"/><feDisplacementMap in="SourceGraphic" scale="17" xChannelSelector="R" yChannelSelector="G"/></filter></defs>
    <style>.line{fill:none;stroke:#d0bac8;stroke-width:3.4}.river{fill:none;stroke:#b4d3df;stroke-width:2.5}</style>
    ${part(west, 0)}${part(east, 653.3)}
    <path d="M188 0V780M598.600 0V780M1008.300 0V780M0 127H1308M0 537H1308" stroke="#fff" stroke-opacity=".12"/>
    <g fill="rgb(158,1,66)" fill-opacity=".2" stroke="rgb(158,1,66)" stroke-opacity=".75" stroke-width="3">${dots}</g></svg>
    <div class="zoom"><span>+</span><span>−</span></div></div>${footer}</section>`;
}

document.getElementById('dashboard').innerHTML = [
  tablePanel({ title: 'TI Alerts', field: 'misp_value', data: `
13.107.42.14|695
185.199.109.153|114
185.199.110.153|97
185.199.110.133|96
185.199.108.153|78
140.82.112.3|34
89.248.165.61|34
140.82.113.4|21
60.248.116.127|21
92.118.39.77|17` }),
  tablePanel({ title: 'Whois', field: 'whois_org', data: `
PSINet, Inc. (PSI-2)|192107
Amazon Data Services NoVa (ADSN-1)|89651
Amazon Technologies Inc. (AT-88-Z)|75697
Apple Inc. (APPLEC-1-Z)|62163
Cloudflare, Inc. (CLOUD14)|59256
Google LLC (GOGL)|55235
ARIN Operations (ARINOPS)|47514
Akamai Technologies, Inc. (AKAMAI)|18013
DigitalOcean, LLC (DO-13)|11862
Amazon.com, Inc. (AMAZON-4)|10753` }),
  tablePanel({ title: 'Top Domains', field: 'domain', extra: domCover, data: `
|25215/3
otx.alienvault.com|96596
registry-1.docker.io|90724
|45862
auth.docker.io|45852
docker.io|45836
scribe.logs.roku.com|14932
|14054
gateway.fe.apple-dns.net|11944` }),
  tablePanel({ title: 'Top Blocked', field: 'blocked', extra: blkCover, data: `
scribe.logs.roku.com|7466
|2158
ocsp2.apple.com|1964
|1918
|1914
ichnaea.netflix.com|975
device-metrics-us.amazon.com|844
<span style="padding-left:145px">ats.iot.us-east-2.amazonaws.com</span>|549
ocsp.pki.goog|394
sdk.iad-06.braze.com|288` }),
  chartPanel(),
  tablePanel({ title: 'DNS Source IP', field: 'dns_src_ip', extra: srcCover, data: `
10.10|286646
10.10|20851
10.10|11690
10.10|8178
10.10|6942
10.10|6473
10.10|5972
10.10|4847
10.10|4781
10.10|4773` }),
  tablePanel({ title: 'DNS Resolved', field: 'dns_ip', extra: resCover, data: `
185.125.|62977
185.125.|62977
3.216.34|26888
34.205.1|26888
44.205.6|26888
99.86.10|16021
99.86.10|16019
99.86.10|16012
99.86.10|16012
18.206.2|8958` }),
  tablePanel({ title: 'Top Dst IP', field: 'dst_ip', cls: 'tall', extra: dstCover, data: `
154.2|176615
74.12|29449
199.7|23797
199.5|23728
34.20|18042
44.20|17904
3.216|17736
100.2|14514
34.22|13995
52.44|13406
154.1|13100
198.4|11915
198.4|11225
198.4|11024` }),
  tablePanel({ title: 'Dest Country', field: 'ip_geo_country', cls: 'half tall', data: `
US|872464
GB|129481
IE|14938
DE|14090
NL|6596
CA|2082
CN|501
SE|429
BR|163
AU|126
JP|124
SG|116
FR|106
UY|88` }),
  tablePanel({ title: 'DST &amp; IP City', field: 'ip_geo_city', cls: 'half tall', data: `
Ashburn|279963
Atlanta|178023
Dallas|38309
St Louis|15894
Dublin|14938
Irving|14671
Mesa|14140
Boardman|12292
Maiden|12279
Frankfurt am Main|10275
Clifton|9895
Kansas City|6426
El Paso|4881
San Jose|2140` }),
  mapPanel(),
  tablePanel({ title: 'Top Hosts', field: 'source', data: `udm|995810` }),
  tablePanel({ title: 'Source IP', field: 'src_ip', extra: ipCover, data: `10.10.|235596` })
].join('');
```
